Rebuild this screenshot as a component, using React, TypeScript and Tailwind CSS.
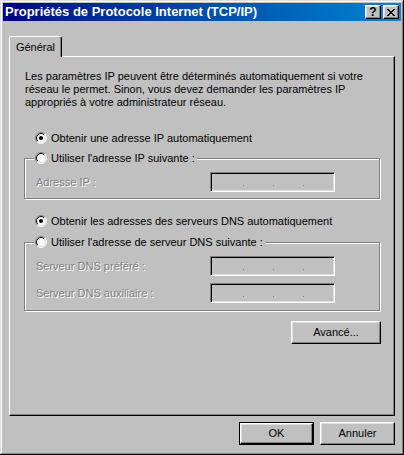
import React from "react";

function Radio({ checked }: { checked?: boolean }) {
  return (
    <svg width="12" height="12" viewBox="0 0 12 12" className="shrink-0">
      <circle cx="6" cy="6" r="5" fill="#fff" />
      <path d="M2.111 9.889A5.5 5.5 0 0 1 9.889 2.111" stroke="#808080" fill="none" />
      <path d="M9.889 2.111A5.5 5.5 0 0 1 2.111 9.889" stroke="#fff" fill="none" />
      <path d="M2.818 9.182A4.5 4.5 0 0 1 9.182 2.818" stroke="#000" fill="none" />
      <path d="M9.182 2.818A4.5 4.5 0 0 1 2.818 9.182" stroke="#dfdfdf" fill="none" />
      {checked && <circle cx="6" cy="6" r="2" fill="#000" />}
    </svg>
  );
}

function IpField() {
  return (
    <div className="w-[125px] h-[20px] bg-[#c0c0c0] border border-[#808080] border-r-white border-b-white shadow-[inset_1px_1px_#000,inset_-1px_-1px_#dfdfdf] flex items-start pl-[32px] pt-[12px] gap-[29px]">
      <span className="block w-[1px] h-[1px] bg-[#808080]" />
      <span className="block w-[1px] h-[1px] bg-[#808080]" />
      <span className="block w-[1px] h-[1px] bg-[#808080]" />
    </div>
  );
}

function Disabled({ children, w }: { children: React.ReactNode; w: string }) {
  return <span className={`${w} text-[#808080] [text-shadow:1px_1px_0_#fff]`}>{children}</span>;
}

const btn =
  "h-[23px] bg-[#c0c0c0] border border-white border-r-black border-b-black shadow-[inset_-1px_-1px_#808080,inset_1px_1px_#dfdfdf] flex items-center justify-center text-[11px] text-black";

export default function App() {
  return (
    <div className="w-[404px] h-[455px] bg-[#c0c0c0] p-[3px] shadow-[inset_-1px_-1px_#000,inset_1px_1px_#dfdfdf,inset_-2px_-2px_#808080,inset_2px_2px_#fff] flex flex-col font-['Liberation_Sans',Arial,sans-serif] text-[11px] text-black leading-[13px]">
      {/* Title bar */}
      <div className="h-[18px] shrink-0 flex items-center bg-linear-to-r from-[#000080] to-[#1084d0] pl-[2px] pr-[2px]">
        <span className="flex-1 text-white font-bold text-[13px] leading-[16px] whitespace-nowrap">
          Propriétés de Protocole Internet (TCP/IP)
        </span>
        <div className="w-[16px] h-[14px] bg-[#c0c0c0] border border-white border-r-black border-b-black shadow-[inset_-1px_-1px_#808080,inset_1px_1px_#dfdfdf] flex items-center justify-center font-bold text-[12px] leading-[12px] text-black">
          ?
        </div>
        <div className="ml-[2px] w-[16px] h-[14px] bg-[#c0c0c0] border border-white border-r-black border-b-black shadow-[inset_-1px_-1px_#808080,inset_1px_1px_#dfdfdf] flex items-center justify-center">
          <svg width="8" height="7" viewBox="0 0 8 7" shapeRendering="crispEdges">
            <path
              fill="#000"
              d="M0 0h2v1H0zM6 0h2v1H6zM1 1h2v1H1zM5 1h2v1H5zM2 2h4v1H2zM3 3h2v1H3zM2 4h4v1H2zM1 5h2v1H1zM5 5h2v1H5zM0 6h2v1H0zM6 6h2v1H6z"
            />
          </svg>
        </div>
      </div>

      <div className="px-[6px] pt-[15px] flex flex-col">
        {/* Tabs */}
        <div className="flex">
          <div className="relative z-10 -mb-px h-[21px] w-[53px] bg-[#c0c0c0] border-t border-l border-r border-white border-r-black rounded-t-[2px] shadow-[inset_-1px_0_#808080] flex items-center justify-center">
            Général
          </div>
        </div>

        {/* Panel */}
        <div className="h-[360px] border border-white border-r-black border-b-black shadow-[inset_-1px_-1px_#808080] pl-[14px] pr-[14px] pt-[13px] flex flex-col">
          <p className="ml-[1px]">
            Les paramètres IP peuvent être déterminés automatiquement si votre
            <br />
            réseau le permet. Sinon, vous devez demander les paramètres IP
            <br />
            appropriés à votre administrateur réseau.
          </p>

          <div className="mt-[22px] h-[14px] ml-[11px] flex items-center gap-[4px]">
            <Radio checked />
            <span>Obtenir une adresse IP automatiquement</span>
          </div>

          <div className="mt-[13px] h-[41px] border border-[#808080] shadow-[inset_1px_1px_#fff,1px_1px_#fff] flex flex-col">
            <div className="-mt-[8px] ml-[9px] h-[14px] w-fit bg-[#c0c0c0] pl-[1px] pr-[2px] flex items-center gap-[4px]">
              <Radio />
              <span>Utiliser l'adresse IP suivante :</span>
            </div>
            <div className="mt-[7px] ml-[11px] flex items-center">
              <Disabled w="w-[174px]">Adresse IP :</Disabled>
              <IpField />
            </div>
          </div>

          <div className="mt-[15px] h-[14px] ml-[11px] flex items-center gap-[4px]">
            <Radio checked />
            <span>Obtenir les adresses des serveurs DNS automatiquement</span>
          </div>

          <div className="mt-[14px] h-[69px] border border-[#808080] shadow-[inset_1px_1px_#fff,1px_1px_#fff] flex flex-col">
            <div className="-mt-[8px] ml-[9px] h-[14px] w-fit bg-[#c0c0c0] pl-[1px] pr-[2px] flex items-center gap-[4px]">
              <Radio />
              <span>Utiliser l'adresse de serveur DNS suivante :</span>
            </div>
            <div className="mt-[7px] ml-[11px] flex items-center">
              <Disabled w="w-[174px]">Serveur DNS préféré :</Disabled>
              <IpField />
            </div>
            <div className="mt-[7px] ml-[11px] flex items-center">
              <Disabled w="w-[174px]">Serveur DNS auxiliaire :</Disabled>
              <IpField />
            </div>
          </div>

          <div className="mt-[10px] flex justify-end -mr-[1px]">
            <div className={`${btn} w-[90px]`}>Avancé...</div>
          </div>
        </div>

        {/* Bottom buttons */}
        <div className="mt-[6px] flex justify-end gap-[6px]">
          <div className="w-[75px] h-[23px] border border-black">
            <div className="h-full bg-[#c0c0c0] border border-white border-r-black border-b-black shadow-[inset_-1px_-1px_#808080,inset_1px_1px_#dfdfdf] flex items-center justify-center">
              OK
            </div>
          </div>
          <div className={`${btn} w-[75px]`}>Annuler</div>
        </div>
      </div>
    </div>
  );
}
